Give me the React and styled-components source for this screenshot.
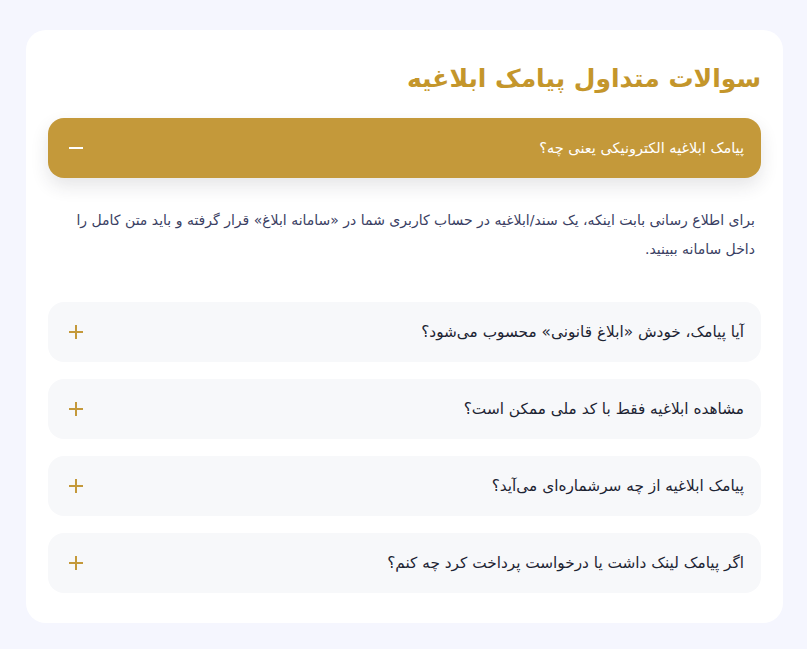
import React, { useState } from "react";
import styled, { createGlobalStyle } from "styled-components";

const GlobalStyle = createGlobalStyle`
  html, body {
    margin: 0;
    padding: 0;
    background: #f5f6fe;
  }
  * { box-sizing: border-box; }
`;

const Page = styled.main`
  direction: rtl;
  padding: 30px 24px 26px 26px;
  font-family: "DejaVu Sans", "Noto Sans", sans-serif;
`;

const Card = styled.section`
  background: #ffffff;
  border-radius: 20px;
  padding: 26px 22px 30px;
`;

const Title = styled.h2`
  margin: 0 0 16px;
  font-size: 25px;
  line-height: 46px;
  font-weight: 700;
  color: #c4962b;
`;

const List = styled.div`
  display: flex;
  flex-direction: column;
  gap: 17px;
`;

const Item = styled.div`
  display: flex;
  flex-direction: column;
`;

const Question = styled.button`
  display: flex;
  align-items: center;
  justify-content: space-between;
  width: 100%;
  height: 60px;
  padding: 0 17px 0 20px;
  border: none;
  border-radius: 16px;
  cursor: pointer;
  font-family: inherit;
  font-size: ${(p) => (p.$open ? "14.5px" : "15.3px")};
  text-align: right;
  background: ${(p) => (p.$open ? "#c4993a" : "#f7f8fa")};
  color: ${(p) => (p.$open ? "#ffffff" : "#1d2433")};
  box-shadow: ${(p) => (p.$open ? "0 8px 18px rgba(40, 40, 60, 0.12)" : "none")};
`;

const Answer = styled.p`
  margin: 0;
  padding: 28px 6px 21px 20px;
  font-size: 14px;
  line-height: 29px;
  color: #3a4063;
`;

const Icon = ({ open, color }) => (
  <svg width="16" height="16" viewBox="0 0 16 16" fill="none" stroke={color} strokeWidth="2">
    <path d="M1 8h14" />
    {!open && <path d="M8 1v14" />}
  </svg>
);

const faqs = [
  {
    q: "پیامک ابلاغیه الکترونیکی یعنی چه؟",
    a: "برای اطلاع رسانی بابت اینکه، یک سند/ابلاغیه در حساب کاربری شما در «سامانه ابلاغ» قرار گرفته و باید متن کامل را داخل سامانه ببینید.",
  },
  { q: "آیا پیامک، خودش «ابلاغ قانونی» محسوب می‌شود؟", a: "" },
  { q: "مشاهده ابلاغیه فقط با کد ملی ممکن است؟", a: "" },
  { q: "پیامک ابلاغیه از چه سرشماره‌ای می‌آید؟", a: "" },
  { q: "اگر پیامک لینک داشت یا درخواست پرداخت کرد چه کنم؟", a: "" },
];

const App = () => {
  const [open, setOpen] = useState(0);

  return (
    <>
      <GlobalStyle />
      <Page>
        <Card>
          <Title>سوالات متداول پیامک ابلاغیه</Title>
          <List>
            {faqs.map((item, index) => {
              const isOpen = open === index;
              return (
                <Item key={`faq_${index}`}>
                  <Question $open={isOpen} onClick={() => setOpen(isOpen ? -1 : index)}>
                    <span>{item.q}</span>
                    <Icon open={isOpen} color={isOpen ? "#ffffff" : "#c4993a"} />
                  </Question>
                  {isOpen && <Answer>{item.a}</Answer>}
                </Item>
              );
            })}
          </List>
        </Card>
      </Page>
    </>
  );
};

export default App;
